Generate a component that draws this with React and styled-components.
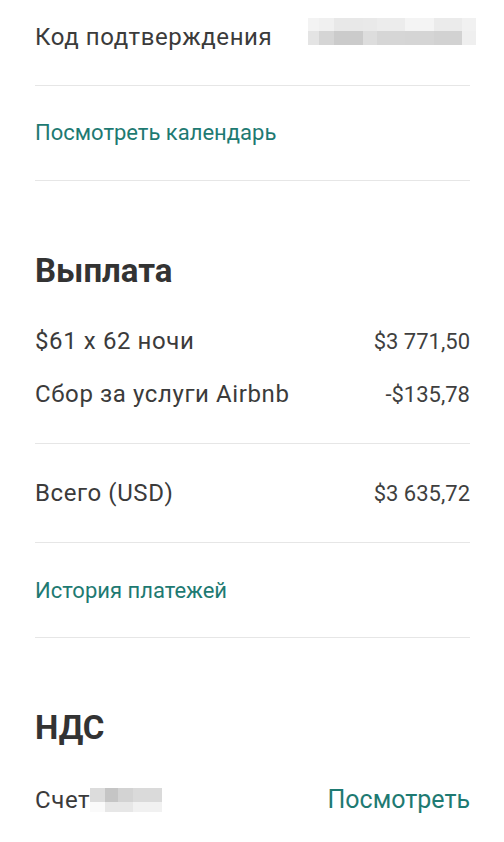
import React from 'react'
import styled, { createGlobalStyle } from 'styled-components'

const GlobalStyle = createGlobalStyle`
  body {
    margin: 0;
    background: #ffffff;
    font-family: Roboto, 'Noto Sans', 'Liberation Sans', sans-serif;
  }
`

const Page = styled.div`
  width: 504px;
  height: 842px;
  overflow: hidden;
  background: #ffffff;
  padding: 0 34px 0 35px;
  box-sizing: border-box;
  color: #3b3b3b;
`

const Section = styled.section`
  display: flex;
  flex-direction: column;
  padding: ${p => p.pad};
  border-bottom: ${p => (p.last ? 'none' : '1px solid #e6e6e6')};
`

const Heading = styled.h2`
  margin: 0 0 ${p => p.gap};
  font-size: 33px;
  line-height: 36px;
  font-weight: 700;
  color: #333333;
`

const Row = styled.div`
  display: flex;
  align-items: ${p => (p.top ? 'flex-start' : 'center')};
  justify-content: space-between;
  min-height: 28px;
  margin-top: ${p => p.gap || '0px'};
`

const Label = styled.span`
  display: flex;
  align-items: center;
  font-size: 24px;
  line-height: 28px;
  letter-spacing: 0.6px;
  padding-top: ${p => p.drop || '0px'};
`

const Amount = styled.span`
  font-size: 22px;
  color: #3f3f3f;
`

const Link = styled.a`
  font-size: ${p => p.size || '22px'};
  line-height: 28px;
  color: #1e7a72;
  text-decoration: none;
`

const Blur = styled.div`
  display: grid;
  grid-template-columns: ${p => p.cols};
  grid-template-rows: ${p => p.rows};
  margin-right: ${p => p.right || '0px'};
`

const Cell = styled.div`
  background: ${p => p.c};
`

const codeCols = '11px 15px 29px 14px 28px 29px 28px 14px'
const codeCells = [
  '#f3f3f3', '#f0f0f0', '#e8e8e8', '#e9e9e9', '#ececec', '#f4f4f4', '#ebebeb', '#f1f1f1',
  '#e4e4e4', '#d5d5d5', '#cbcbcb', '#dddddd', '#d6d6d6', '#d5d5d5', '#d2d2d2', '#efefef'
]

const invoiceCols = '15px 13px 15px 29px'
const invoiceCells = [
  '#dcdcdc', '#c5c5c5', '#d3d3d3', '#dadada',
  '#fafafa', '#e7e7e7', '#e7e7e7', '#f1f1f1'
]

const Pixels = ({ cols, rows, cells, right }) => (
  <Blur cols={cols} rows={rows} right={right}>
    {cells.map((c, i) => (
      <Cell key={i} c={c} />
    ))}
  </Blur>
)

export default function App() {
  return (
    <>
      <GlobalStyle />
      <Page>
        <Section pad='18px 0 34px'>
          <Row top>
            <Label drop='5px'>Код подтверждения</Label>
            <Pixels cols={codeCols} rows='13px 14px' cells={codeCells} right='-6px' />
          </Row>
        </Section>

        <Section pad='33px 0 33px'>
          <Link href='#'>Посмотреть календарь</Link>
        </Section>

        <Section pad='72px 0 35px'>
          <Heading gap='38px'>Выплата</Heading>
          <Row>
            <Label>$61 x 62 ночи</Label>
            <Amount>$3 771,50</Amount>
          </Row>
          <Row gap='25px'>
            <Label>Сбор за услуги Airbnb</Label>
            <Amount>-$135,78</Amount>
          </Row>
        </Section>

        <Section pad='35px 0 35px'>
          <Row>
            <Label>Всего (USD)</Label>
            <Amount>$3 635,72</Amount>
          </Row>
        </Section>

        <Section pad='34px 0 32px'>
          <Link href='#'>История платежей</Link>
        </Section>

        <Section pad='72px 0 0' last>
          <Heading gap='40px'>НДС</Heading>
          <Row>
            <Label>
              Счет
              <Pixels cols={invoiceCols} rows='14px 10px' cells={invoiceCells} />
            </Label>
            <Link href='#' size='25px'>Посмотреть</Link>
          </Row>
        </Section>
      </Page>
    </>
  )
}
